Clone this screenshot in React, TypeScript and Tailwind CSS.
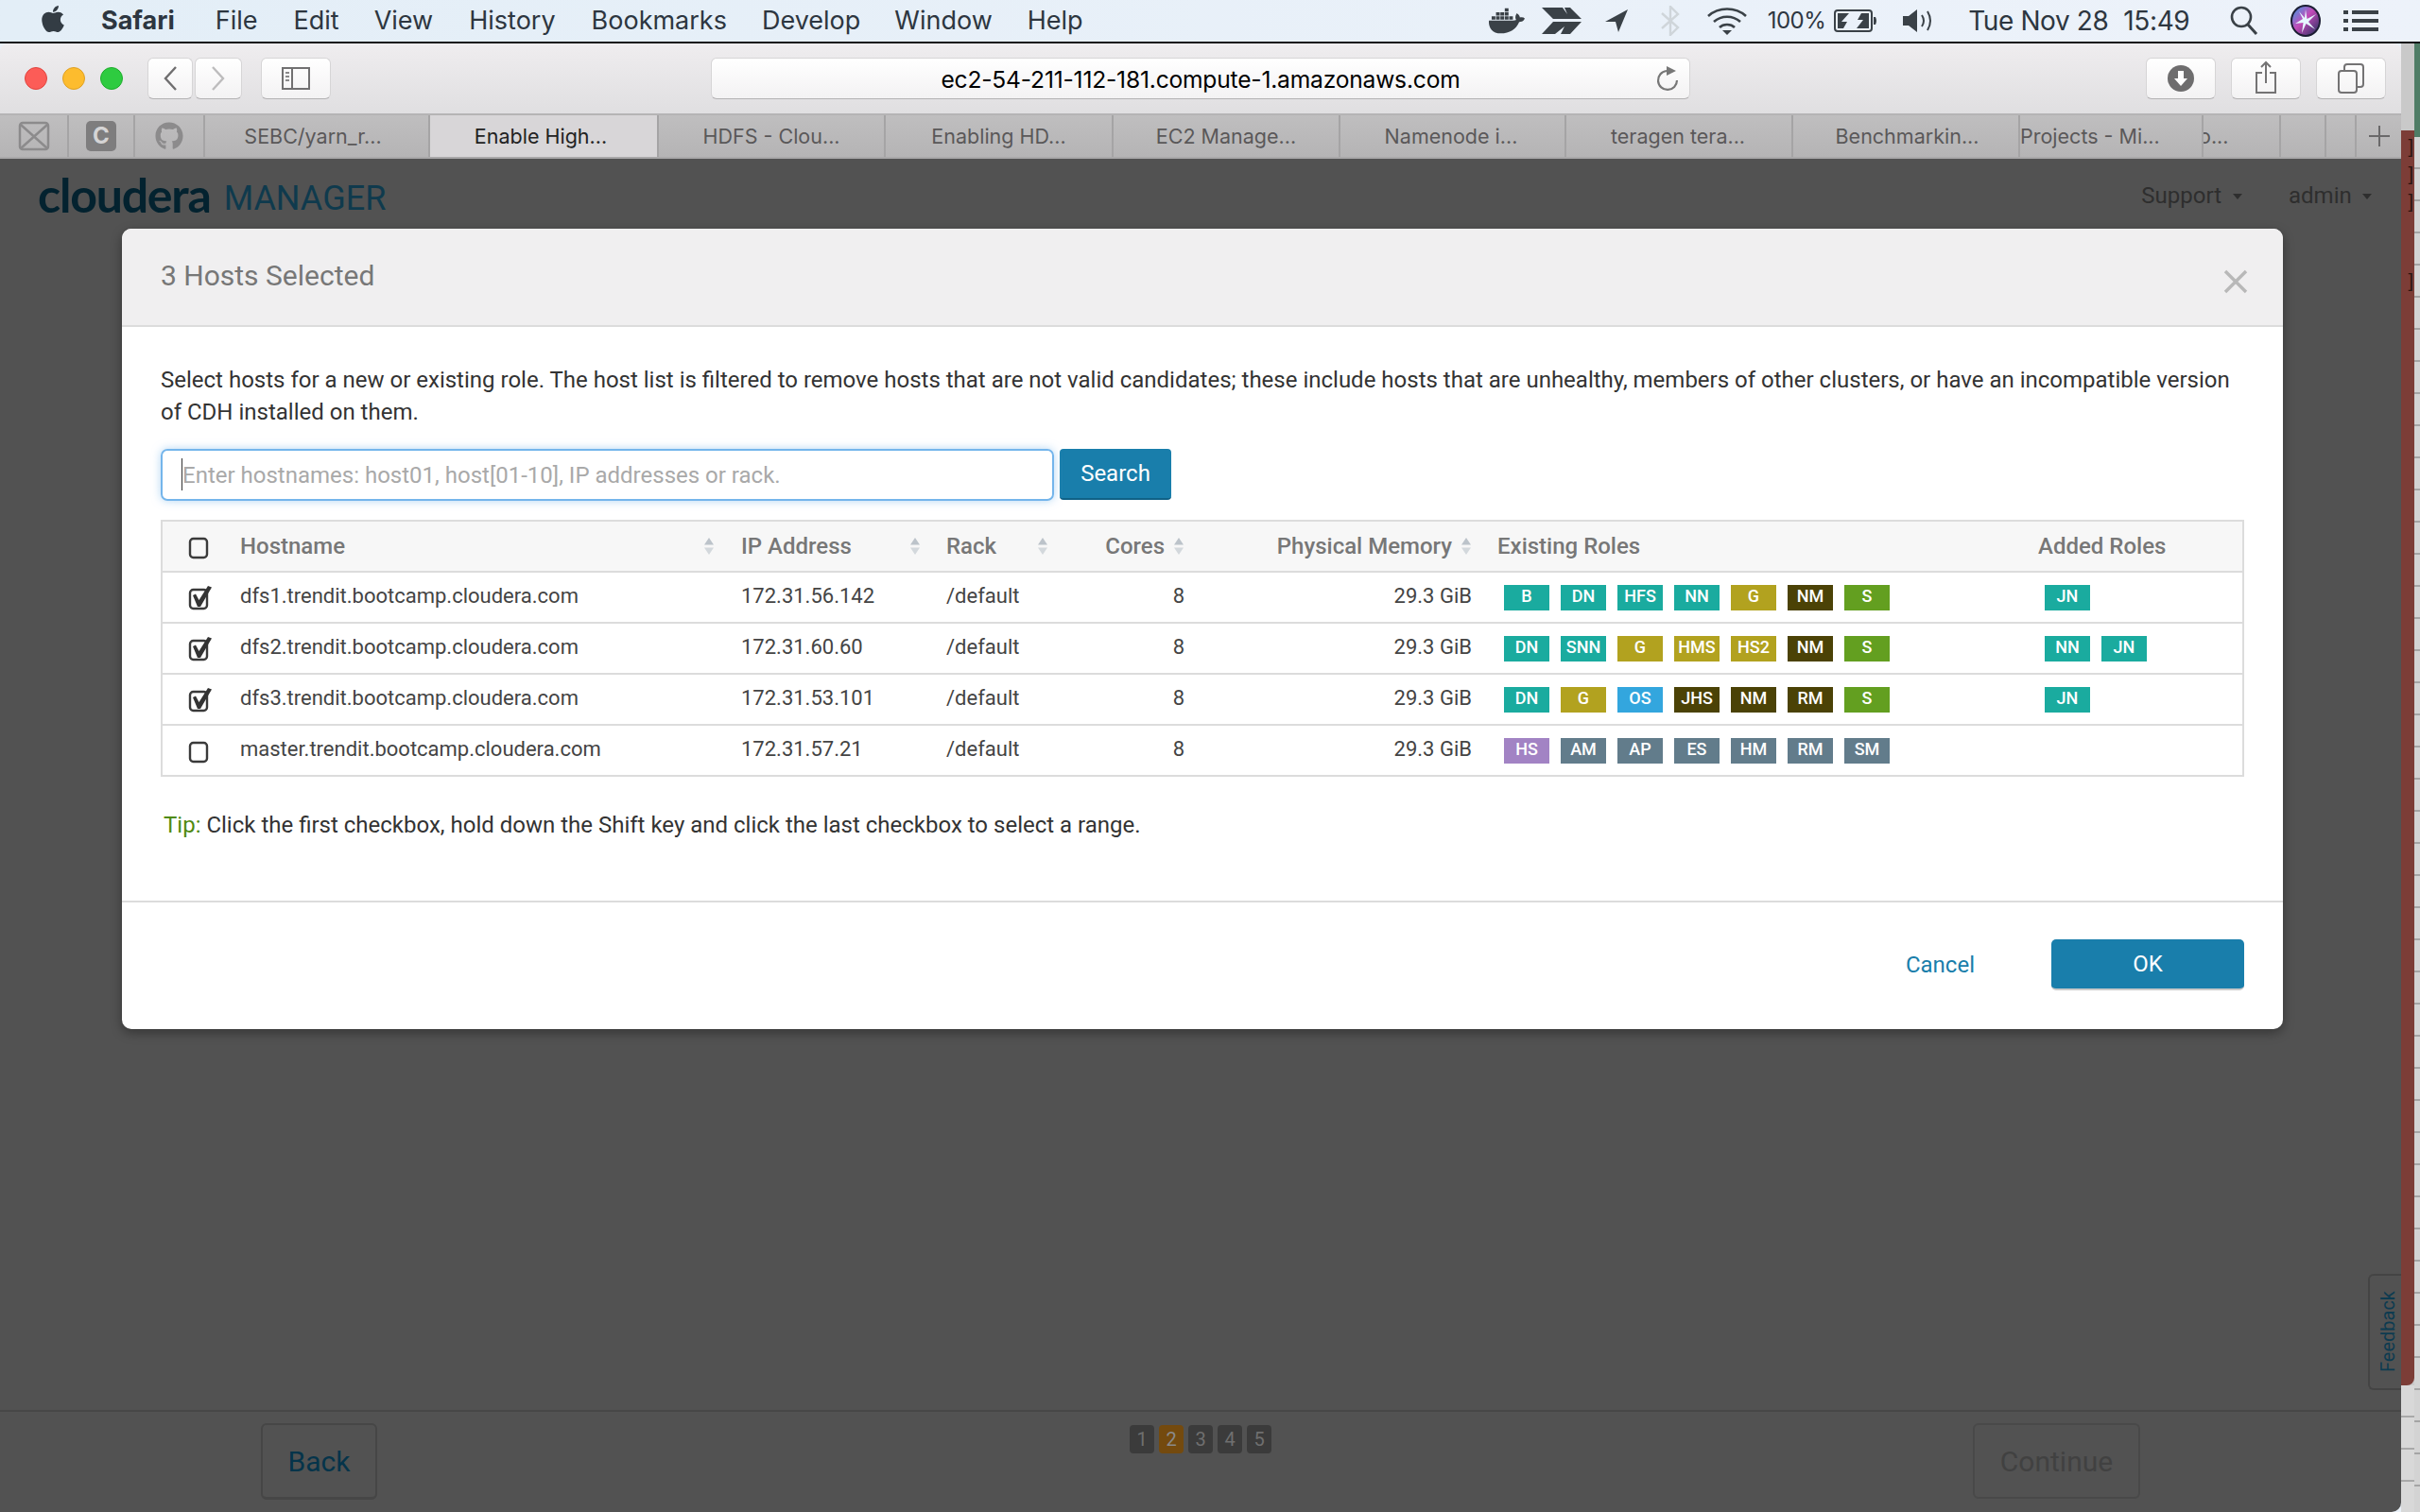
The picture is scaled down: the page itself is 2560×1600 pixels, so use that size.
import { FaApple, FaDocker, FaGithub } from 'react-icons/fa';

const teal = 'bg-[#1aab9f]';
const olive = 'bg-[#b2a21f]';
const dark = 'bg-[#4b4206]';
const green = 'bg-[#639f20]';
const blue = 'bg-[#33a6de]';
const purple = 'bg-[#a283c4]';
const slate = 'bg-[#627c8b]';

type Role = [string, string];

const hosts: { name: string; ip: string; checked: boolean; roles: Role[]; added: Role[] }[] = [
  {
    name: 'dfs1.trendit.bootcamp.cloudera.com',
    ip: '172.31.56.142',
    checked: true,
    roles: [['B', teal], ['DN', teal], ['HFS', teal], ['NN', teal], ['G', olive], ['NM', dark], ['S', green]],
    added: [['JN', teal]],
  },
  {
    name: 'dfs2.trendit.bootcamp.cloudera.com',
    ip: '172.31.60.60',
    checked: true,
    roles: [['DN', teal], ['SNN', teal], ['G', olive], ['HMS', olive], ['HS2', olive], ['NM', dark], ['S', green]],
    added: [['NN', teal], ['JN', teal]],
  },
  {
    name: 'dfs3.trendit.bootcamp.cloudera.com',
    ip: '172.31.53.101',
    checked: true,
    roles: [['DN', teal], ['G', olive], ['OS', blue], ['JHS', dark], ['NM', dark], ['RM', dark], ['S', green]],
    added: [['JN', teal]],
  },
  {
    name: 'master.trendit.bootcamp.cloudera.com',
    ip: '172.31.57.21',
    checked: false,
    roles: [['HS', purple], ['AM', slate], ['AP', slate], ['ES', slate], ['HM', slate], ['RM', slate], ['SM', slate]],
    added: [],
  },
];

const menus = [
  ['File', 'ml-[43px]'],
  ['Edit', 'ml-[38px]'],
  ['View', 'ml-[37px]'],
  ['History', 'ml-[38px]'],
  ['Bookmarks', 'ml-[38px]'],
  ['Develop', 'ml-[37px]'],
  ['Window', 'ml-[36px]'],
  ['Help', 'ml-[37px]'],
];

const tabs = [
  ['SEBC/yarn_r...', 'w-[238px]', 'text-[#5a5859] justify-center pr-[8px]', 'bg-transparent'],
  ['Enable High...', 'w-[242px]', 'text-[#222] justify-center pr-[6px]', 'bg-[#d8d6d8]'],
  ['HDFS - Clou...', 'w-[240px]', 'text-[#5a5859] justify-center', 'bg-transparent'],
  ['Enabling HD...', 'w-[241px]', 'text-[#5a5859] justify-center', 'bg-transparent'],
  ['EC2 Manage...', 'w-[240px]', 'text-[#5a5859] justify-center', 'bg-transparent'],
  ['Namenode i...', 'w-[239px]', 'text-[#5a5859] justify-center pr-[3px]', 'bg-transparent'],
  ['teragen tera...', 'w-[240px]', 'text-[#5a5859] justify-center pr-[2px]', 'bg-transparent'],
  ['Benchmarkin...', 'w-[240px]', 'text-[#5a5859] justify-center pl-[3px]', 'bg-transparent'],
  ['Projects - Mi...', 'w-[194px]', 'text-[#5a5859] justify-start', 'bg-transparent'],
  ['o...', 'w-[82px]', 'text-[#5a5859] block leading-[44px] [text-indent:-5px]', 'bg-transparent'],
  ['', 'w-[48px]', '', 'bg-transparent'],
  ['', 'w-[32px]', '', 'bg-transparent'],
];

function SortIcon() {
  return (
    <svg width="12" height="20" viewBox="0 0 12 20" className="shrink-0">
      <path d="M6 1 L11 8.5 H1 Z" fill="#bcc3ca" />
      <path d="M1 11.5 H11 L6 19 Z" fill="#d3d8dc" />
    </svg>
  );
}

function Checkbox({ checked }: { checked: boolean }) {
  return (
    <svg width="30" height="28" viewBox="0 0 30 28" className="ml-[27px]">
      <rect x="2" y="6" width="18" height="20" rx="3.5" fill="none" stroke="#3a3a3a" strokeWidth="2.4" />
      {checked && <path d="M5 12 L8 10.5 L11.5 17 L21 2 L25 3.5 L13 24 L10 24 Z" fill="#333" />}
    </svg>
  );
}

function Badge({ role }: { role: Role }) {
  return (
    <span className={`flex w-[48px] h-[27px] items-center justify-center text-white text-[18px] font-medium leading-none pb-[2px] ${role[1]}`}>
      {role[0]}
    </span>
  );
}

function HostRow({ host }: { host: (typeof hosts)[number] }) {
  return (
    <div className="grid grid-cols-[82px_530px_217px_111px_142px_330px_572px_215px] h-[54px] items-center border-b-2 border-[#dcdcdc] text-[22px] text-[#444]">
      <Checkbox checked={host.checked} />
      <span className="mb-[4px]">{host.name}</span>
      <span className="mb-[4px]">{host.ip}</span>
      <span className="mb-[4px]">/default</span>
      <span className="mb-[4px] text-right pr-[1px]">8</span>
      <span className="mb-[4px] text-right pr-[27px]">29.3 GiB</span>
      <div className="flex gap-[12px] pl-[7px]">
        {host.roles.map((r) => (
          <Badge key={r[0]} role={r} />
        ))}
      </div>
      <div className="flex gap-[12px] pl-[7px]">
        {host.added.map((r) => (
          <Badge key={r[0]} role={r} />
        ))}
      </div>
    </div>
  );
}

function ToolButton({ className, children }: { className: string; children?: React.ReactNode }) {
  return (
    <div className={`flex h-[44px] items-center justify-center rounded-[6px] bg-gradient-to-b from-white to-[#f3f2f3] border border-[#d6d5d6] border-b-[#b4b3b4] ${className}`}>
      {children}
    </div>
  );
}

function MenuBar() {
  return (
    <div className="flex h-[44px] items-center bg-gradient-to-r from-[#e3eef7] to-[#edf2fa] text-[#2d3640] text-[27px] [font-family:Inter,sans-serif]">
      <FaApple className="ml-[40px] mb-[4px] text-[32px] text-[#333c44]" />
      <span className="ml-[35px] font-bold text-[27px]">Safari</span>
      {menus.map(([m, ml]) => (
        <span key={m} className={ml}>
          {m}
        </span>
      ))}
      <FaDocker className="ml-[429px] text-[38px] text-[#3a4147]" />
      {/* feather */}
      <svg width="42" height="28" viewBox="0 0 42 28" className="ml-[18px]">
        <path d="M0 0 H22 L27 7 L24 0 H30 L42 12 H12 Z M12 15 H42 L30 28 H20 L24 20 L14 28 H0 Z" fill="#3a4147" />
      </svg>
      {/* location */}
      <svg width="24" height="24" viewBox="0 0 24 24" className="ml-[25px]">
        <path d="M24 0 L14 24 L11 13 L0 13 Z" fill="#3a4147" />
      </svg>
      {/* bluetooth */}
      <svg width="20" height="32" viewBox="0 0 20 32" className="ml-[35px]">
        <path d="M1 8 L18 23 L10 31 V1 L18 9 L1 24" fill="none" stroke="#cfd5da" strokeWidth="2.4" />
      </svg>
      {/* wifi */}
      <svg width="42" height="30" viewBox="0 0 42 30" className="ml-[29px]">
        <path d="M1 10 C12 0 30 0 41 10 M7 16 C15 9 27 9 35 16 M13 22 C17 18 25 18 29 22" fill="none" stroke="#3a4147" strokeWidth="2.6" />
        <path d="M16 25 H26 L21 30 Z" fill="#3a4147" />
      </svg>
      <span className="ml-[22px] text-[24px] tracking-[-0.5px]">100%</span>
      {/* battery */}
      <svg width="46" height="26" viewBox="0 0 46 26" className="ml-[9px]">
        <rect x="1" y="2" width="39" height="22" rx="3" fill="none" stroke="#3a4147" strokeWidth="2" />
        <path d="M4 5 H16 L8 14 H14 L10 21 H4 Z M37 5 V21 H24 L31 12 H25 L29 5 Z" fill="#3a4147" />
        <path d="M42 9 H44 Q46 13 44 17 H42 Z" fill="#3a4147" />
      </svg>
      {/* speaker */}
      <svg width="34" height="28" viewBox="0 0 34 28" className="ml-[27px]">
        <path d="M0 9 H6 L15 2 V26 L6 19 H0 Z" fill="#3a4147" />
        <path d="M20 8 Q24 14 20 20 M26 4 Q32 14 26 24" fill="none" stroke="#3a4147" strokeWidth="2" />
      </svg>
      <span className="ml-[35px] text-[28px] tracking-[-0.4px] whitespace-nowrap">Tue Nov 28</span>
      <span className="ml-[16px] text-[28px] tracking-[-0.4px]">15:49</span>
      {/* search */}
      <svg width="30" height="32" viewBox="0 0 30 32" className="ml-[43px]">
        <circle cx="12" cy="12" r="10" fill="none" stroke="#3a4147" strokeWidth="2.6" />
        <path d="M19 20 L28 30" stroke="#3a4147" strokeWidth="3" />
      </svg>
      {/* siri */}
      <svg width="32" height="34" viewBox="0 0 32 34" className="ml-[34px]">
        <defs>
          <linearGradient id="siri" x1="0" y1="0" x2="1" y2="1">
            <stop offset="0" stopColor="#3d9fe8" />
            <stop offset="0.45" stopColor="#c24bb8" />
            <stop offset="1" stopColor="#23305f" />
          </linearGradient>
        </defs>
        <ellipse cx="16" cy="17" rx="16" ry="17" fill="#1b1d33" />
        <ellipse cx="16" cy="17" rx="14" ry="15" fill="url(#siri)" />
        <path d="M16 5 L17.5 15 L27 10 L19 18 L26 26 L16.5 20 L12 30 L13.5 19 L5 20 L13 15 L9 7 L15 14 Z" fill="#e6f6ff" />
      </svg>
      {/* list */}
      <svg width="37" height="24" viewBox="0 0 37 24" className="ml-[24px]">
        <path d="M0 1 H5 V5 H0 Z M0 10 H5 V14 H0 Z M0 19 H5 V23 H0 Z M9 1 H37 V5 H9 Z M9 10 H37 V14 H9 Z M9 19 H37 V23 H9 Z" fill="#3a4147" />
      </svg>
    </div>
  );
}

function Toolbar() {
  return (
    <div className="flex h-[76px] items-center bg-gradient-to-b from-[#efedef] to-[#e0dfe1] border-b-2 border-[#b5b4b5]">
      <span className="ml-[26px] w-[24px] h-[24px] rounded-full bg-[#fc5c57] border border-[#e0443e]" />
      <span className="ml-[16px] w-[24px] h-[24px] rounded-full bg-[#fdbc2e] border border-[#dfa023]" />
      <span className="ml-[16px] w-[24px] h-[24px] rounded-full bg-[#2ecb40] border border-[#1dad2b]" />
      <ToolButton className="ml-[26px] w-[48px]">
        <svg width="16" height="28" viewBox="0 0 16 28">
          <path d="M14 2 L3 14 L14 26" fill="none" stroke="#6f6e6f" strokeWidth="2.4" />
        </svg>
      </ToolButton>
      <ToolButton className="ml-[2px] w-[50px]">
        <svg width="16" height="28" viewBox="0 0 16 28">
          <path d="M2 2 L13 14 L2 26" fill="none" stroke="#bdbcbd" strokeWidth="2.4" />
        </svg>
      </ToolButton>
      <ToolButton className="ml-[20px] w-[74px]">
        <svg width="30" height="24" viewBox="0 0 30 24">
          <rect x="1" y="1" width="28" height="22" fill="none" stroke="#717071" strokeWidth="2" />
          <path d="M11 1 V23" stroke="#717071" strokeWidth="2" />
          <path d="M4 5 H8 V7 H4 Z M4 9 H8 V11 H4 Z M4 13 H8 V15 H4 Z" fill="#8a898a" />
        </svg>
      </ToolButton>
      <ToolButton className="ml-[402px] w-[1036px] relative">
        <span className="text-[24.6px] text-black [font-family:Inter,sans-serif] tracking-[-0.2px] mt-[2px]">ec2-54-211-112-181.compute-1.amazonaws.com</span>
        <svg width="26" height="28" viewBox="0 0 26 28" className="absolute right-[10px] top-[7px]">
          <path d="M12 6 A10 10 0 1 0 23 16" fill="none" stroke="#777" strokeWidth="2.2" />
          <path d="M12 1 L22 6 L12 11 Z" fill="#777" />
        </svg>
      </ToolButton>
      <ToolButton className="ml-[482px] w-[74px]">
        <svg width="28" height="28" viewBox="0 0 28 28">
          <circle cx="14" cy="14" r="14" fill="#6e6d6e" />
          <path d="M11 6 H17 V14 H21 L14 22 L7 14 H11 Z" fill="#fff" />
        </svg>
      </ToolButton>
      <ToolButton className="ml-[16px] w-[74px]">
        <svg width="24" height="36" viewBox="0 0 24 36" className="mb-[2px]">
          <path d="M8 13 H2 V34 H22 V13 H16" fill="none" stroke="#747374" strokeWidth="2" />
          <path d="M12 24 V2 M7 7 L12 2 L17 7" fill="none" stroke="#747374" strokeWidth="2" />
        </svg>
      </ToolButton>
      <ToolButton className="ml-[16px] w-[74px]">
        <svg width="28" height="32" viewBox="0 0 28 32">
          <rect x="1" y="8" width="19" height="23" rx="3" fill="none" stroke="#747374" strokeWidth="2" />
          <path d="M7 8 V4 Q7 1 10 1 H24 Q27 1 27 4 V22 Q27 25 24 25 H20" fill="none" stroke="#747374" strokeWidth="2" />
        </svg>
      </ToolButton>
    </div>
  );
}

function TabBar() {
  return (
    <div className="flex h-[46px] bg-gradient-to-b from-[#bfbebf] to-[#b5b4b5] border-b-2 border-[#a9a8a9] text-[21.5px] [font-family:Inter,sans-serif]">
      <div className="flex w-[73px] items-center justify-center border-r-2 border-[#a5a4a5]">
        <svg width="34" height="32" viewBox="0 0 34 32">
          <rect x="2" y="2" width="30" height="28" rx="3" fill="none" stroke="#8c8b8c" strokeWidth="2.5" />
          <path d="M3 4 L31 29 M31 4 L3 29" stroke="#8c8b8c" strokeWidth="2.5" />
        </svg>
      </div>
      <div className="flex w-[70px] items-center justify-center border-r-2 border-[#a5a4a5]">
        <span className="flex w-[32px] h-[32px] items-center justify-center rounded-[5px] bg-[#7e7d7e] text-[#d5d4d5] font-bold text-[24px]">C</span>
      </div>
      <div className="flex w-[74px] items-center justify-center border-r-2 border-[#a5a4a5]">
        <FaGithub className="text-[30px] text-[#8c8b8c]" />
      </div>
      {tabs.map(([label, w, text, bg], i) => (
        <div key={i} className={`flex items-center overflow-hidden whitespace-nowrap border-r-2 border-[#a5a4a5] ${w} ${text} ${bg}`}>
          {label}
        </div>
      ))}
      <div className="flex flex-1 items-center justify-center">
        <svg width="24" height="24" viewBox="0 0 24 24">
          <path d="M12 1 V23 M1 12 H23" stroke="#6a696a" strokeWidth="2" />
        </svg>
      </div>
    </div>
  );
}

function Modal() {
  return (
    <div className="absolute left-[129px] top-[196px] w-[2286px] rounded-[10px] bg-white overflow-hidden shadow-[0_4px_12px_rgba(0,0,0,0.35)] [font-family:Roboto,sans-serif]">
      <div className="relative flex h-[104px] items-start border-b-2 border-[#dcdcdc] bg-[#f0eff0] pl-[41px] pt-[30px]">
        <h3 className="text-[30px] leading-[40px] text-[#777]">3 Hosts Selected</h3>
        <svg width="26" height="26" viewBox="0 0 26 26" className="absolute right-[37px] top-[43px]">
          <path d="M2 2 L24 24 M24 2 L2 24" stroke="#b8b8b8" strokeWidth="3.4" />
        </svg>
      </div>

      <div className="px-[41px] pt-[39px] pb-[63px]">
        <p className="text-[24px] leading-[34px] text-[#333]">
          Select hosts for a new or existing role. The host list is filtered to remove hosts that are not valid candidates; these include hosts that are unhealthy, members of other clusters, or have an incompatible version of CDH installed on them.
        </p>

        <div className="mt-[22px] flex gap-[6px]">
          <div className="relative w-[945px]">
            <input
              readOnly
              placeholder="Enter hostnames: host01, host[01-10], IP addresses or rack."
              className="block w-full h-[55px] rounded-[7px] border-2 border-[#74b5eb] pl-[21px] text-[24px] outline-none shadow-[0_0_10px_rgba(116,181,235,0.55)] placeholder:text-[#a9a9a9]"
            />
            <span className="absolute left-[22px] top-[10px] h-[34px] w-px bg-[#333]" />
          </div>
          <button className="w-[118px] h-[54px] rounded-[4px] bg-[#197eab] border-b-2 border-[#0f6186] text-[24px] text-white">Search</button>
        </div>

        <div className="mt-[20px] border-2 border-b-0 border-[#dcdcdc]">
          <div className="grid grid-cols-[82px_530px_217px_111px_142px_330px_572px_215px] h-[54px] items-center border-b-2 border-[#dcdcdc] bg-[#f7f7f7] text-[24px] font-medium text-[#777]">
            <Checkbox checked={false} />
            <div className="flex items-center justify-between pr-[28px]">
              Hostname
              <SortIcon />
            </div>
            <div className="flex items-center justify-between pr-[27px]">
              IP Address
              <SortIcon />
            </div>
            <div className="flex items-center justify-between pr-[3px]">
              Rack
              <SortIcon />
            </div>
            <div className="flex items-center justify-end gap-[9px] pr-[1px]">
              Cores
              <SortIcon />
            </div>
            <div className="flex items-center justify-end gap-[9px] pr-[27px]">
              Physical Memory
              <SortIcon />
            </div>
            <div>Existing Roles</div>
            <div>Added Roles</div>
          </div>
          {hosts.map((h) => (
            <HostRow key={h.name} host={h} />
          ))}
        </div>

        <p className="mt-[34px] pl-[3px] text-[24px] leading-[34px] text-[#333]">
          <span className="text-[#4f8a10]">Tip:</span> Click the first checkbox, hold down the Shift key and click the last checkbox to select a range.
        </p>
      </div>

      <div className="flex items-start justify-end border-t-2 border-[#dcdcdc] pt-[39px] pb-[41px] pr-[41px]">
        <a className="mr-[81px] text-[24px] leading-[54px] text-[#197eab]">Cancel</a>
        <button className="w-[204px] h-[54px] rounded-[5px] bg-[#197eab] border-b-2 border-[#c9c9c9] text-[24px] text-white">OK</button>
      </div>
    </div>
  );
}

function PageBehind() {
  return (
    <div className="relative flex flex-1 flex-col bg-[#525252] [font-family:Roboto,sans-serif]">
      <div className="flex h-[80px] items-start pl-[40px] pt-[12px]">
        <span className="text-[50px] leading-[52px] font-bold tracking-[-1.2px] text-[#03222f] [font-family:Lato,sans-serif]">cloudera</span>
        <span className="ml-[14px] mt-[7px] text-[36px] leading-[46px] text-[#0f3a4d]">MANAGER</span>
        <span className="ml-[1857px] mt-[10px] text-[24px] leading-[34px] text-[#2e2e2e]">Support</span>
        <span className="ml-[12px] mt-[25px] border-x-[5px] border-t-[6px] border-x-transparent border-t-[#2e2e2e]" />
        <span className="ml-[49px] mt-[10px] text-[24px] leading-[34px] text-[#2e2e2e]">admin</span>
        <span className="ml-[11px] mt-[25px] border-x-[5px] border-t-[6px] border-x-transparent border-t-[#2e2e2e]" />
      </div>

      <div className="flex-1" />

      {/* Feedback tab */}
      <div className="absolute right-0 top-[1180px] flex h-[123px] w-[35px] items-center justify-center rounded-l-[6px] border-2 border-r-0 border-[#444] pl-[5px]">
        <span className="[writing-mode:vertical-rl] rotate-180 text-[20px] text-[#0d3b50]">Feedback</span>
      </div>

      <div className="flex h-[108px] items-start border-t-2 border-[#474747] pt-[12px]">
        <div className="ml-[276px] flex h-[81px] w-[123px] items-center justify-center rounded-[6px] border-2 border-b-[3px] border-[#464646] text-[30px] text-[#05344a]">Back</div>
        <div className="ml-[796px] mt-[2px] flex gap-[5px]">
          {['1', '2', '3', '4', '5'].map((n) => (
            <span
              key={n}
              className={
                n === '2'
                  ? 'flex h-[30px] w-[26px] items-center justify-center rounded-[4px] bg-[#744a0e] text-[20px] text-[#8a8a8a]'
                  : 'flex h-[30px] w-[26px] items-center justify-center rounded-[4px] bg-[#3b3b3b] text-[20px] text-[#6f6f6f]'
              }
            >
              {n}
            </span>
          ))}
        </div>
        <div className="ml-[742px] flex h-[80px] w-[177px] items-center justify-center rounded-[6px] border-2 border-[#494949] text-[30px] text-[#414141]">Continue</div>
      </div>
    </div>
  );
}

function DesktopStrip() {
  return (
    <div className="flex flex-1 bg-[#c9c9c9]">
      <div className="flex w-[14px] flex-col">
        <div className="h-[92px] bg-[#c9c9c9]" />
        <div className="flex h-[1328px] flex-col items-end rounded-br-[8px] bg-[#7c3d37] pr-[1px] pt-[3px] text-[20px] leading-[29px] text-[#2a1410] [font-family:'Liberation_Sans',sans-serif]">
          <span>]</span>
          <span>]</span>
          <span>]</span>
          <span className="mt-[55px]">]</span>
        </div>
        <div className="flex-1 bg-[repeating-linear-gradient(180deg,#d8d8d8_0px,#d8d8d8_32px,#a9a9a9_32px,#a9a9a9_34px)]" />
      </div>
      <div className="flex flex-1 flex-col">
        <div className="h-[99px] bg-[#4f7d66]" />
        <div className="flex-1 bg-[repeating-linear-gradient(180deg,#d3d3d3_0px,#d3d3d3_32px,#a5a5a5_32px,#a5a5a5_34px)]" />
      </div>
    </div>
  );
}

export default function App() {
  return (
    <div className="flex flex-col w-[2560px] h-[1600px] overflow-hidden bg-[#e9f0f8]">
      <MenuBar />
      <div className="h-[2px] bg-[#111]" />
      <div className="flex flex-1">
        <div className="relative flex w-[2540px] flex-col overflow-hidden rounded-t-[8px] rounded-br-[10px]">
          <Toolbar />
          <TabBar />
          <PageBehind />
          <Modal />
        </div>
        <DesktopStrip />
      </div>
    </div>
  );
}
